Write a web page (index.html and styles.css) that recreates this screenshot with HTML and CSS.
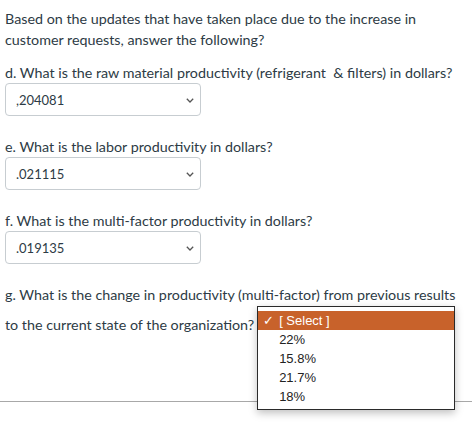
FILE: index.html
```html
<!DOCTYPE html>
<html>
<head>
<meta charset="utf-8">
<link rel="stylesheet" href="styles.css">
</head>
<body>
<div class="page">
  <p class="intro">Based on the updates that have taken place due to the increase in customer requests, answer the following?</p>

  <div class="question q-d">
    <p class="label">d. What is the raw material productivity (refrigerant &nbsp;&amp; filters) in dollars?</p>
    <div class="select"><span class="value">,204081</span><svg class="chev" width="8" height="5" viewBox="0 0 8 5"><path d="M0.8 0.8 L4 4 L7.2 0.8" fill="none" stroke="#555" stroke-width="1.3"/></svg></div>
  </div>

  <div class="question">
    <p class="label">e. What is the labor productivity in dollars?</p>
    <div class="select"><span class="value">.021115</span><svg class="chev" width="8" height="5" viewBox="0 0 8 5"><path d="M0.8 0.8 L4 4 L7.2 0.8" fill="none" stroke="#555" stroke-width="1.3"/></svg></div>
  </div>

  <div class="question">
    <p class="label">f. What is the multi-factor productivity in dollars?</p>
    <div class="select"><span class="value">.019135</span><svg class="chev" width="8" height="5" viewBox="0 0 8 5"><path d="M0.8 0.8 L4 4 L7.2 0.8" fill="none" stroke="#555" stroke-width="1.3"/></svg></div>
  </div>

  <div class="question q-g">
    <p class="label">g. What is the change in productivity (multi-factor) from previous results</p>
    <p class="label line2">to the current state of the organization?<span class="inline-select"><span class="menu">
      <span class="opt selected"><span class="check">✓</span>[ Select ]</span>
      <span class="opt">22%</span>
      <span class="opt">15.8%</span>
      <span class="opt">21.7%</span>
      <span class="opt">18%</span>
    </span></span></p>
  </div>
</div>
<div class="rule"></div>
</body>
</html>
```

FILE: styles.css
```css
html, body {
  margin: 0;
  padding: 0;
  background: #fff;
}
body {
  font-family: Lato, "Liberation Sans", sans-serif;
  color: #2d3b45;
  font-size: 14.3px;
  width: 472px;
  height: 425px;
  overflow: hidden;
  position: relative;
}
.page {
  padding: 8px 0 0 5px;
  width: 462px;
}
p {
  margin: 0;
}
.intro {
  line-height: 21px;
}
.question {
  margin-top: 20px;
}
.q-d {
  margin-top: 12px;
}
.label {
  line-height: 21px;
  white-space: nowrap;
}
.select {
  box-sizing: border-box;
  width: 196px;
  height: 33px;
  border: 1px solid #c7cdd1;
  border-radius: 4px;
  display: flex;
  align-items: center;
  justify-content: space-between;
  padding: 0 6px 0 10px;
  font-size: 13px;
  color: #2d3b45;
}
.chev {
  display: block;
  margin-top: 2px;
}
.q-g .line2 {
  margin-top: 9px;
}
.inline-select {
  display: inline-block;
  position: relative;
  width: 196px;
  height: 21px;
  vertical-align: top;
  margin-left: 3px;
}
.menu {
  position: absolute;
  left: 0;
  top: -8px;
  width: 198px;
  box-sizing: border-box;
  background: #fff;
  border: 1px solid #2a2a2a;
  box-shadow: 0 3px 8px rgba(0,0,0,0.25);
  padding: 4px 0 3px;
  display: flex;
  flex-direction: column;
  font-family: "Liberation Sans", Arial, sans-serif;
  font-size: 13px;
  color: #222;
  z-index: 2;
}
.opt {
  display: block;
  height: 19px;
  line-height: 19px;
  padding-left: 21px;
}
.opt.selected {
  background: #c8622b;
  color: #fff;
  padding-left: 5px;
}
.check {
  display: inline-block;
  width: 16px;
}
.rule {
  position: absolute;
  left: 0;
  top: 401px;
  width: 472px;
  height: 1px;
  background: #a8a8a8;
  z-index: 1;
}
```
